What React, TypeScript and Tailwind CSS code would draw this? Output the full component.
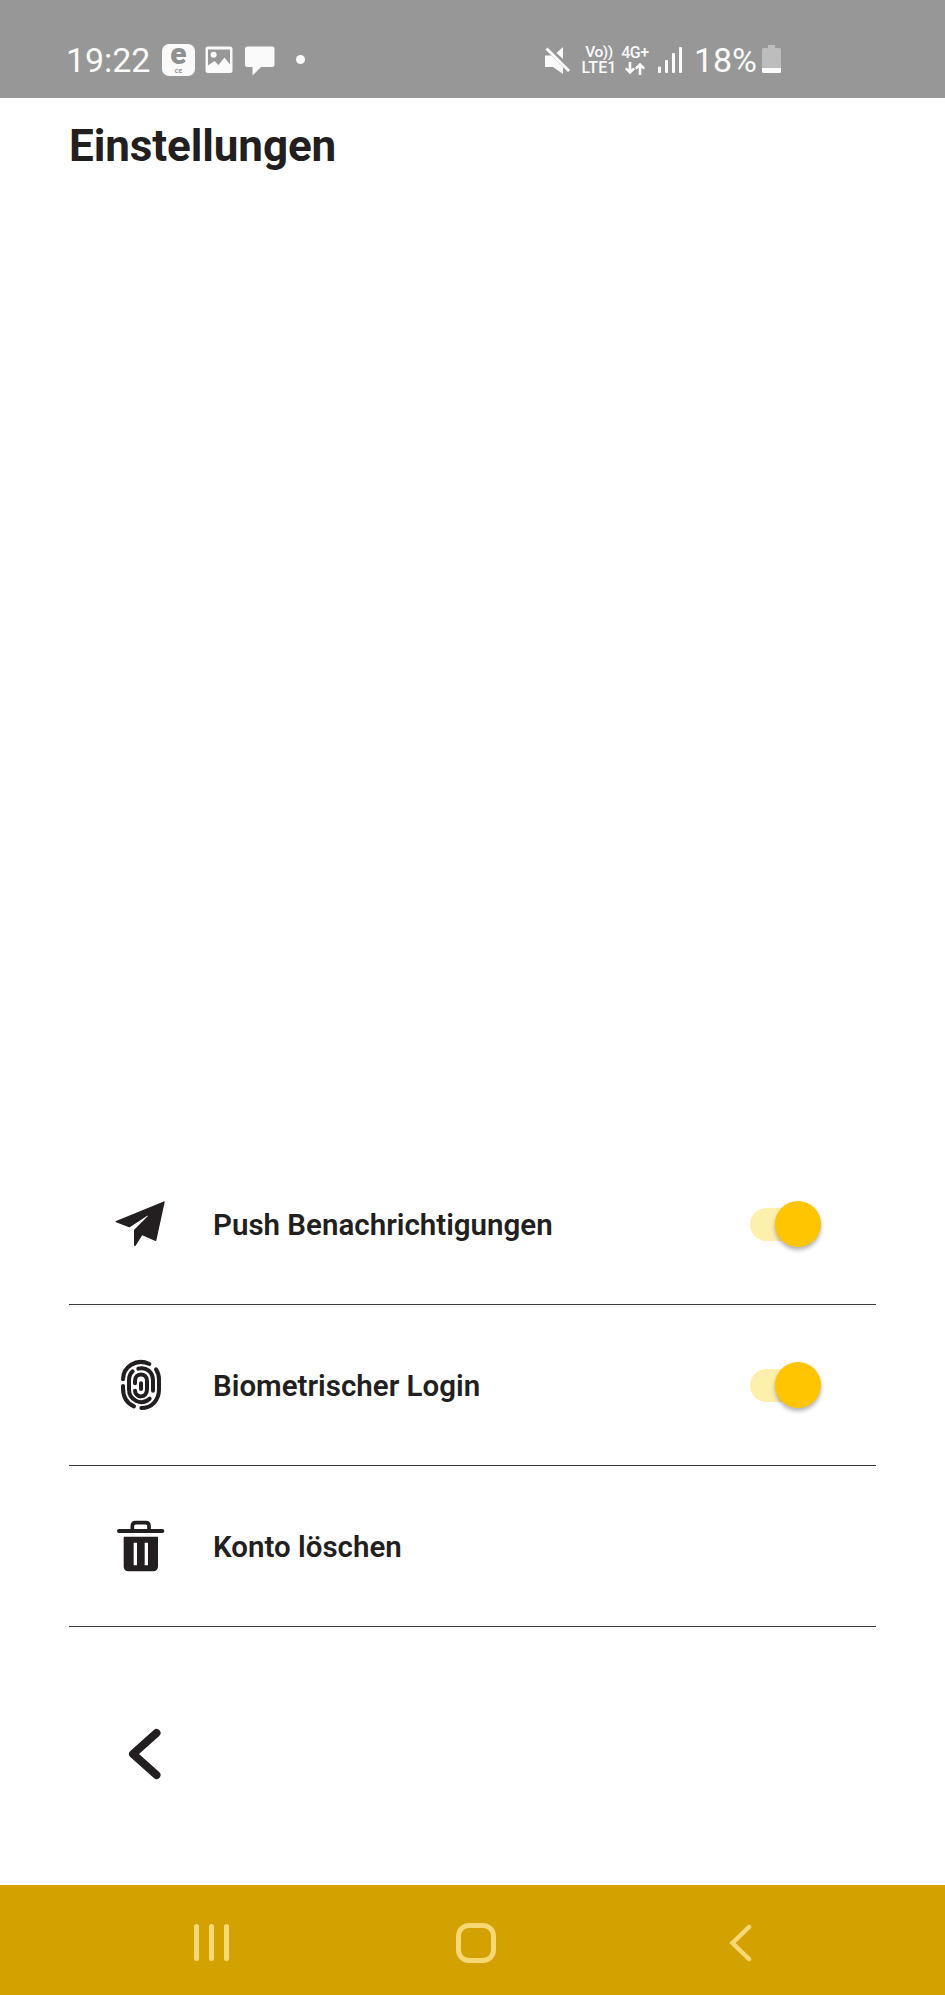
import { useState } from "react"
import type { ReactNode } from "react"
import { clsx } from "clsx"

function StatusBar() {
    return (
        <header className="h-[98px] shrink-0 bg-[#979797] text-[#fafafa] flex items-start pl-[66px] pt-11">
            <span className="w-24 text-[34px] leading-8 tracking-[-0.1px]">19:22</span>

            {/* Notifications */}
            <div className="w-[33px] h-8 rounded-[7px] bg-[#fafafa] text-[#8f8f8f] flex flex-col items-center">
                <span className="text-[30px] font-black leading-[20px] h-[23px]">e</span>
                <span className="text-[6px] font-bold leading-[7px]">CE</span>
            </div>
            <svg className="ml-[10px] mt-[2px]" width="28" height="28" viewBox="0 0 28 28">
                <rect x="0.5" y="0.5" width="27" height="26.5" rx="2.5" fill="#fafafa" />
                <path d="M3 3.5h22v15l-5.5-7-6 7.5-4-4L3 19.5z" fill="#979797" />
                <circle cx="8.6" cy="8.8" r="3" fill="#fafafa" />
            </svg>
            <svg className="ml-3 mt-[2px]" width="30" height="31" viewBox="0 0 30 31">
                <path d="M2.5 .5h24.500q2.500 0 2.500 2.500v15.500q0 2.500-2.500 2.500H16L7.500 29.500V21H2.500Q0 21 0 18.500V3Q0 .5 2.500 .5z" fill="#fafafa" />
            </svg>
            <span className="ml-[21px] mt-[11px] size-[9px] rounded-full bg-[#fafafa]" />

            {/* Connectivity */}
            <svg className="ml-[240px] mt-px" width="27" height="30" viewBox="0 0 27 30">
                <path d="M0 10.500h6.500L18 22v7L8 22H0zM18 2v12l-6.500-6z" fill="#fafafa" />
                <path d="M1.500 3.500l22.500 22.500" stroke="#fafafa" strokeWidth="3" />
            </svg>
            <div className="ml-[9px] w-9 flex flex-col items-center font-medium text-base leading-4 whitespace-nowrap">
                <span className="text-[15.500px] tracking-[-0.5px]">Vo))</span>
                <span className="tracking-[0.1px]">LTE1</span>
            </div>
            <div className="ml-[2px] w-8 mt-[1px] flex flex-col items-center font-medium text-[16px] leading-[15px] tracking-[-0.4px]">
                <span>4G+</span>
                <svg className="mt-[2px]" width="20" height="13" viewBox="0 0 20 13" fill="none" stroke="#fafafa" strokeWidth="2.600">
                    <path d="M5 0v11M.8 6.300L5 10.500l4.200-4.200M15 13V2M10.800 6.700L15 2.500l4.200 4.200" />
                </svg>
            </div>
            <svg className="ml-[7px] mt-[2px]" width="25" height="28" viewBox="0 0 25 28" fill="#fafafa">
                <rect x="0" y="20.500" width="3" height="6.500" rx="1" />
                <rect x="7" y="14" width="3" height="13" rx="1" />
                <rect x="14" y="7" width="3" height="20" rx="1" />
                <rect x="21" y="1" width="3" height="26" rx="1" />
            </svg>
            <span className="ml-[11px] w-[68px] text-[34px] leading-8 tracking-[-0.1px]">18%</span>
            <svg width="20" height="30" viewBox="0 0 20 30">
                <path d="M6 1h7v3h4.500q1.500 0 1.500 1.500V24H0V5.500Q0 4 1.500 4H6z" fill="#bdbdbd" />
                <path d="M0 24h19v3.500q0 1.500-1.500 1.500h-16Q0 29 0 27.500z" fill="#fafafa" />
            </svg>
        </header>
    )
}

function PlaneIcon() {
    return (
        <svg width="50" height="46" viewBox="0 0 150 138">
            <path
                d="M147 3L4 62l39 15L97 42q6 0 4 4L59 88v45h1l21-33 41 18z"
                fill="#231f20" stroke="#231f20" strokeWidth="4" strokeLinejoin="round"
            />
        </svg>
    )
}

function FingerprintIcon() {
    return (
        <svg className="ml-[5px]" width="43" height="52" viewBox="60 57 129 156" fill="none" stroke="#231f20" strokeWidth="12" strokeLinecap="round">
            <path d="M148 72C108 53 69 82 69 118" />
            <path d="M69 138V144C69 172 81 190 102 199" />
            <path d="M168 88Q177 101 177 119V148C177 181 155 204 124 204" />
            <path d="M115 86C139 80 159 96 159 122V152" />
            <path d="M98 94Q87 104 87 121V148C87 182 125 198 149 176" />
            <path d="M105 130V122C105 97 141 97 141 122V148C141 176 106 175 105 152" />
            <path d="M123 130V147" />
        </svg>
    )
}

function TrashIcon() {
    return (
        <svg className="ml-[2px]" width="48" height="52" viewBox="0 0 144 156" fill="#231f20">
            <path d="M46 30V18Q46 8 56 8H86Q96 8 96 18V30" fill="none" stroke="#231f20" strokeWidth="11" />
            <rect x="0" y="27" width="142" height="12" rx="6" />
            <path
                fillRule="evenodd"
                d="M20 50H123V139Q123 154 108 154H35Q20 154 20 139ZM50 68V136H60V68ZM83 68V136H93V68Z"
            />
        </svg>
    )
}

function Toggle({ checked, label, onChange }: { checked: boolean; label: string; onChange: () => void }) {
    return (
        <button
            role="switch"
            aria-checked={checked}
            aria-label={label}
            onClick={onChange}
            className={clsx("w-[71px] h-[46px] flex items-center", checked ? "justify-end" : "justify-start")}
        >
            <span className={clsx("w-[71px] h-[33px] rounded-full flex items-center", checked ? "bg-[#ffefad] justify-end" : "bg-gray-300 justify-start")}>
                <span className={clsx("size-[46px] shrink-0 rounded-full shadow-[0_3px_4px_rgba(0,0,0,0.3)]", checked ? "bg-[#ffc500]" : "bg-gray-50")} />
            </span>
        </button>
    )
}

function SettingsRow({ icon, label, children }: { icon: ReactNode; label: string; children?: ReactNode }) {
    return (
        <li className="h-[161px] flex items-center border-b border-[#3c3c3e] pr-[55px]">
            <span className="w-36 pl-[46px] flex items-center shrink-0">{icon}</span>
            <span className="flex-1 pt-[2px] text-[29.5px] leading-9 font-semibold">{label}</span>
            {children}
        </li>
    )
}

function NavigationBar() {
    return (
        <nav className="h-[110px] shrink-0 bg-[#d3a200] flex items-center pl-[194px] pt-[5px]">
            <button aria-label="Letzte Apps" className="w-[35px] flex justify-between">
                <span className="w-[5px] h-[37px] rounded-full bg-[#f8d775]" />
                <span className="w-[5px] h-[37px] rounded-full bg-[#f8d775]" />
                <span className="w-[5px] h-[37px] rounded-full bg-[#f8d775]" />
            </button>
            <button aria-label="Startseite" className="ml-[227px] size-10 rounded-[13px] border-[5px] border-[#f8d775]" />
            <button aria-label="Zurück" className="ml-[233px]">
                <svg width="23" height="38" viewBox="0 0 23 38" fill="none" stroke="#f8d775" strokeWidth="4.500" strokeLinecap="round" strokeLinejoin="miter">
                    <path d="M20 3L3.500 19L20 35" />
                </svg>
            </button>
        </nav>
    )
}

export default function App() {
    const [push, setPush] = useState(true)
    const [biometric, setBiometric] = useState(true)

    return (
        <div className="w-[945px] h-[1995px] flex flex-col bg-white text-[#231f20] font-['Roboto',sans-serif] overflow-hidden">
            <StatusBar />
            <main className="flex-1 flex flex-col px-[69px]">
                <h1 className="pt-[22px] text-[44px] leading-[52px] font-bold tracking-[-0.1px]">Einstellungen</h1>

                <ul className="mt-auto">
                    <SettingsRow icon={<PlaneIcon />} label="Push Benachrichtigungen">
                        <Toggle checked={push} label="Push Benachrichtigungen" onChange={() => setPush(!push)} />
                    </SettingsRow>
                    <SettingsRow icon={<FingerprintIcon />} label="Biometrischer Login">
                        <Toggle checked={biometric} label="Biometrischer Login" onChange={() => setBiometric(!biometric)} />
                    </SettingsRow>
                    <SettingsRow icon={<TrashIcon />} label="Konto löschen" />
                </ul>

                <button aria-label="Zurück" className="self-start mt-[101px] ml-[59px] mb-[105px]">
                    <svg width="34" height="52" viewBox="0 0 34 52" fill="none" stroke="#231f20" strokeWidth="8" strokeLinecap="round" strokeLinejoin="round">
                        <path d="M28.500 5L5 26L28.500 47" />
                    </svg>
                </button>
            </main>
            <NavigationBar />
        </div>
    )
}
